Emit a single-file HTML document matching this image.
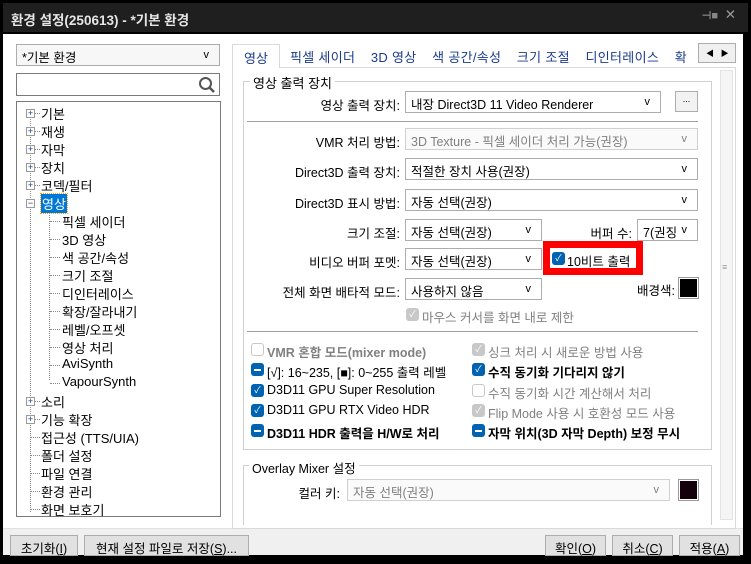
<!DOCTYPE html>
<html><head><meta charset="utf-8"><style>
*{box-sizing:border-box;margin:0;padding:0}
body{width:751px;height:564px;background:#000;position:relative;overflow:hidden;font-family:"Liberation Sans","Noto Sans CJK KR",sans-serif;font-size:12.5px;color:#000}
.a{position:absolute;white-space:nowrap}
#title{left:3px;top:3px;width:745px;height:29px;background:#1f1f1f;color:#e6e6e6;font-size:13.5px;padding:6px 0 0 8px;font-weight:bold}
#main{left:3px;top:34px;width:740px;height:521px;background:#fff}
.box{position:absolute;background:#fff;border:1px solid #7a7a7a}
.cb{position:absolute;background:#fff;border:1px solid #acacac;height:22px;padding:2px 0 0 5px;font-size:12.5px}
.cb:after{content:"v";position:absolute;right:10px;top:4px;font-size:11px}
.dis{color:#808080;border-color:#d0d0d0;background:#fafafa}
.lbl{position:absolute;text-align:right;white-space:nowrap}
.btn{position:absolute;border:1px solid #adadad;background:#e1e1e1;height:21px;text-align:center;padding-top:2px;font-size:12.5px}
.ck{position:absolute;width:13px;height:13px;border-radius:3px;background:#0063b1;color:#fff;font-size:9px;text-align:center;line-height:13px}
.ck.e{background:#fff;border:1px solid #c8c8c8}
.ck.g{background:#c8c8c8}
.ck.m:after{content:"";position:absolute;left:3px;top:6px;width:7px;height:2px;background:#fff}
.ti{position:absolute;white-space:nowrap}
.pl{position:absolute;width:9px;height:9px;border:1px solid #9a9a9a;background:#fff;font-size:9px;line-height:7px;text-align:center;color:#1a3a8a}
.dl{position:absolute;height:1px;border-top:1px dotted #888}
</style></head><body>
<div id="title" class="a">환경 설정(250613) - *기본 환경<span style="position:absolute;right:30px;top:6px;color:#888;font-size:11px">⊣■</span><span style="position:absolute;right:12px;top:4px;color:#999;font-weight:normal">✕</span></div>
<div id="main" class="a"></div>
<div class="a" style="left:3px;top:528px;width:740px;height:27px;background:#f0f0f0;border-top:1px solid #e0e0e0"></div>
<!-- left combo -->
<div class="cb" style="left:16px;top:44px;width:204px;height:22px;background:#f7f7f7">*기본 환경</div>
<div class="box" style="left:16px;top:73px;width:204px;height:23px"><svg style="position:absolute;right:3px;top:2px" width="18" height="18"><circle cx="7.5" cy="7.5" r="5.5" fill="none" stroke="#555" stroke-width="2"/><line x1="11.5" y1="11.5" x2="16" y2="16" stroke="#555" stroke-width="2.5"/></svg></div>
<div class="box" style="left:16px;top:101px;width:205px;height:416px;font-size:13px">
<div style="position:absolute;left:13px;top:10px;height:400px;border-left:1px dotted #888"></div>
<div style="position:absolute;left:32px;top:106px;height:172px;border-left:1px dotted #888;"></div>
<div class="pl" style="left:9px;top:7px">+</div><div class="dl" style="left:18px;top:11px;width:5px"></div><div class="ti" style="left:24px;top:2px">기본</div>
<div class="pl" style="left:9px;top:25px">+</div><div class="dl" style="left:18px;top:29px;width:5px"></div><div class="ti" style="left:24px;top:20px">재생</div>
<div class="pl" style="left:9px;top:43px">+</div><div class="dl" style="left:18px;top:47px;width:5px"></div><div class="ti" style="left:24px;top:38px">자막</div>
<div class="pl" style="left:9px;top:61px">+</div><div class="dl" style="left:18px;top:65px;width:5px"></div><div class="ti" style="left:24px;top:56px">장치</div>
<div class="pl" style="left:9px;top:79px">+</div><div class="dl" style="left:18px;top:83px;width:5px"></div><div class="ti" style="left:24px;top:74px">코덱/필터</div>
<div class="pl" style="left:9px;top:97px">−</div><div class="ti" style="left:24px;top:92px;background:#0078d7;color:#fff;padding:0 1px;outline:1px dotted #f90">영상</div>
<div class="dl" style="left:33px;top:119px;width:10px"></div><div class="ti" style="left:45px;top:110px">픽셀 세이더</div>
<div class="dl" style="left:33px;top:137px;width:10px"></div><div class="ti" style="left:45px;top:128px">3D 영상</div>
<div class="dl" style="left:33px;top:155px;width:10px"></div><div class="ti" style="left:45px;top:146px">색 공간/속성</div>
<div class="dl" style="left:33px;top:173px;width:10px"></div><div class="ti" style="left:45px;top:164px">크기 조절</div>
<div class="dl" style="left:33px;top:191px;width:10px"></div><div class="ti" style="left:45px;top:182px">디인터레이스</div>
<div class="dl" style="left:33px;top:209px;width:10px"></div><div class="ti" style="left:45px;top:200px">확장/잘라내기</div>
<div class="dl" style="left:33px;top:227px;width:10px"></div><div class="ti" style="left:45px;top:218px">레벨/오프셋</div>
<div class="dl" style="left:33px;top:245px;width:10px"></div><div class="ti" style="left:45px;top:236px">영상 처리</div>
<div class="dl" style="left:33px;top:263px;width:10px"></div><div class="ti" style="left:45px;top:254px">AviSynth</div>
<div class="dl" style="left:33px;top:281px;width:10px"></div><div class="ti" style="left:45px;top:272px">VapourSynth</div>
<div class="pl" style="left:9px;top:295px">+</div><div class="dl" style="left:18px;top:299px;width:5px"></div><div class="ti" style="left:24px;top:290px">소리</div>
<div class="pl" style="left:9px;top:313px">+</div><div class="dl" style="left:18px;top:317px;width:5px"></div><div class="ti" style="left:24px;top:308px">기능 확장</div>
<div class="dl" style="left:14px;top:335px;width:9px"></div><div class="ti" style="left:24px;top:326px">접근성 (TTS/UIA)</div>
<div class="dl" style="left:14px;top:353px;width:9px"></div><div class="ti" style="left:24px;top:344px">폴더 설정</div>
<div class="dl" style="left:14px;top:371px;width:9px"></div><div class="ti" style="left:24px;top:362px">파일 연결</div>
<div class="dl" style="left:14px;top:389px;width:9px"></div><div class="ti" style="left:24px;top:380px">환경 관리</div>
<div class="dl" style="left:14px;top:407px;width:9px"></div><div class="ti" style="left:24px;top:398px">화면 보호기</div>
</div>
<!-- tabs -->
<div class="a" style="left:232px;top:67px;width:504px;height:462px;background:#fff;border:1px solid #d9d9d9"></div>
<div class="a" style="left:232px;top:44px;width:48px;height:24px;background:#fff;border:1px solid #d9d9d9;border-bottom:none;padding:3px 0 0 11px;color:#1a3a8a;font-size:13px">영상</div>
<div class="a" style="left:290px;top:47px;font-size:13px;color:#1a3a8a;letter-spacing:0.3px">픽셀 세이더 &nbsp;&nbsp; 3D 영상 &nbsp;&nbsp; 색 공간/속성 &nbsp;&nbsp; 크기 조절 &nbsp;&nbsp; 디인터레이스 &nbsp;&nbsp; 확</div>
<div class="a" style="left:698px;top:43px;width:38px;height:20px;background:#f0f0f0;border:1px solid #adadad;font-size:8px;padding:4px 0 0 7px">◀ &nbsp;&nbsp;▶</div>
<!-- scrollbar -->
<div class="a" style="left:720px;top:70px;width:13px;height:450px;background:#f5f5f5;border:1px solid #e3e3e3"></div>
<div class="a" style="left:722px;top:262px;font-size:9px;color:#999">≡</div>
<!-- group 1 -->
<div class="a" style="left:243px;top:81px;width:469px;height:369px;border:1px solid #d0d0d0"></div>
<div class="a" style="left:250px;top:73px;background:#fff;padding:0 3px;font-size:13px">영상 출력 장치</div>
<div class="lbl" style="left:250px;top:95px;width:150px">영상 출력 장치:</div>
<div class="cb" style="left:405px;top:91px;width:256px">내장 Direct3D 11 Video Renderer</div>
<div class="btn" style="left:675px;top:91px;width:23px;background:#f2f2f2;font-size:9px">...</div>
<div class="a" style="left:247px;top:121px;width:451px;height:1px;background:#a0a0a0"></div>
<div class="lbl" style="left:250px;top:132px;width:150px">VMR 처리 방법:</div>
<div class="cb dis" style="left:405px;top:128px;width:293px">3D Texture - 픽셀 세이더 처리 가능(권장)</div>
<div class="lbl" style="left:250px;top:162px;width:150px">Direct3D 출력 장치:</div>
<div class="cb" style="left:405px;top:158px;width:293px">적절한 장치 사용(권장)</div>
<div class="lbl" style="left:250px;top:193px;width:150px">Direct3D 표시 방법:</div>
<div class="cb" style="left:405px;top:189px;width:293px">자동 선택(권장)</div>
<div class="lbl" style="left:250px;top:223px;width:150px">크기 조절:</div>
<div class="cb" style="left:405px;top:219px;width:137px">자동 선택(권장)</div>
<div class="lbl" style="left:560px;top:223px;width:72px">버퍼 수:</div>
<div class="cb" style="left:637px;top:219px;width:61px">7(권징</div>
<div class="lbl" style="left:250px;top:252px;width:150px">비디오 버퍼 포멧:</div>
<div class="cb" style="left:405px;top:248px;width:137px">자동 선택(권장)</div>
<div class="a" style="left:543px;top:241px;width:100px;height:34px;border:7px solid #f00;background:#fff"></div>
<div class="ck" style="left:552px;top:252px">✓</div>
<div class="a" style="left:567px;top:251px">10비트 출력</div>
<div class="lbl" style="left:250px;top:282px;width:150px">전체 화면 배타적 모드:</div>
<div class="cb" style="left:405px;top:278px;width:137px">사용하지 않음</div>
<div class="lbl" style="left:610px;top:280px;width:65px">배경색:</div>
<div class="a" style="left:678px;top:277px;width:21px;height:22px;background:#000;border:1px solid #999;box-shadow:inset 0 0 0 1px #fff"></div>
<div class="ck g" style="left:406px;top:308px">✓</div>
<div class="a" style="left:422px;top:307px;color:#808080">마우스 커서를 화면 내로 제한</div>
<div class="a" style="left:247px;top:331px;width:451px;height:1px;background:#a0a0a0"></div>
<div class="ck e" style="left:251px;top:343px"></div><div class="a" style="left:267px;top:342px;color:#808080;font-weight:bold">VMR 혼합 모드(mixer mode)</div>
<div class="ck g" style="left:472px;top:343px">✓</div><div class="a" style="left:488px;top:342px;color:#808080">싱크 처리 시 새로운 방법 사용</div>
<div class="ck m" style="left:251px;top:363px"></div><div class="a" style="left:267px;top:362px">[√]: 16~235, [■]: 0~255 출력 레벨</div>
<div class="ck" style="left:472px;top:363px">✓</div><div class="a" style="left:488px;top:362px;font-weight:bold">수직 동기화 기다리지 않기</div>
<div class="ck" style="left:251px;top:384px">✓</div><div class="a" style="left:267px;top:383px">D3D11 GPU Super Resolution</div>
<div class="ck e" style="left:472px;top:384px"></div><div class="a" style="left:488px;top:383px;color:#808080">수직 동기화 시간 계산해서 처리</div>
<div class="ck" style="left:251px;top:404px">✓</div><div class="a" style="left:267px;top:403px">D3D11 GPU RTX Video HDR</div>
<div class="ck g" style="left:472px;top:404px">✓</div><div class="a" style="left:488px;top:403px;color:#808080">Flip Mode 사용 시 호환성 모드 사용</div>
<div class="ck m" style="left:251px;top:424px"></div><div class="a" style="left:267px;top:423px;font-weight:bold">D3D11 HDR 출력을 H/W로 처리</div>
<div class="ck m" style="left:472px;top:424px"></div><div class="a" style="left:488px;top:423px;font-weight:bold">자막 위치(3D 자막 Depth) 보정 무시</div>
<!-- group 2 -->
<div class="a" style="left:243px;top:465px;width:469px;height:60px;border:1px solid #d0d0d0;border-bottom:none"></div>
<div class="a" style="left:249px;top:458px;background:#fff;padding:0 3px">Overlay Mixer 설정</div>
<div class="lbl" style="left:250px;top:483px;width:90px">컬러 키:</div>
<div class="cb dis" style="left:347px;top:479px;width:323px">자동 선택(권장)</div>
<div class="a" style="left:678px;top:479px;width:21px;height:22px;background:#14000a;border:1px solid #999;box-shadow:inset 0 0 0 1px #fff"></div>
<!-- bottom buttons -->
<div class="btn" style="left:10px;top:535px;width:68px">초기화(<u>I</u>)</div>
<div class="btn" style="left:84px;top:535px;width:165px">현재 설정 파일로 저장(<u>S</u>)...</div>
<div class="btn" style="left:545px;top:535px;width:61px">확인(<u>O</u>)</div>
<div class="btn" style="left:612px;top:535px;width:61px">취소(<u>C</u>)</div>
<div class="btn" style="left:679px;top:535px;width:61px">적용(<u>A</u>)</div>
</body></html>
